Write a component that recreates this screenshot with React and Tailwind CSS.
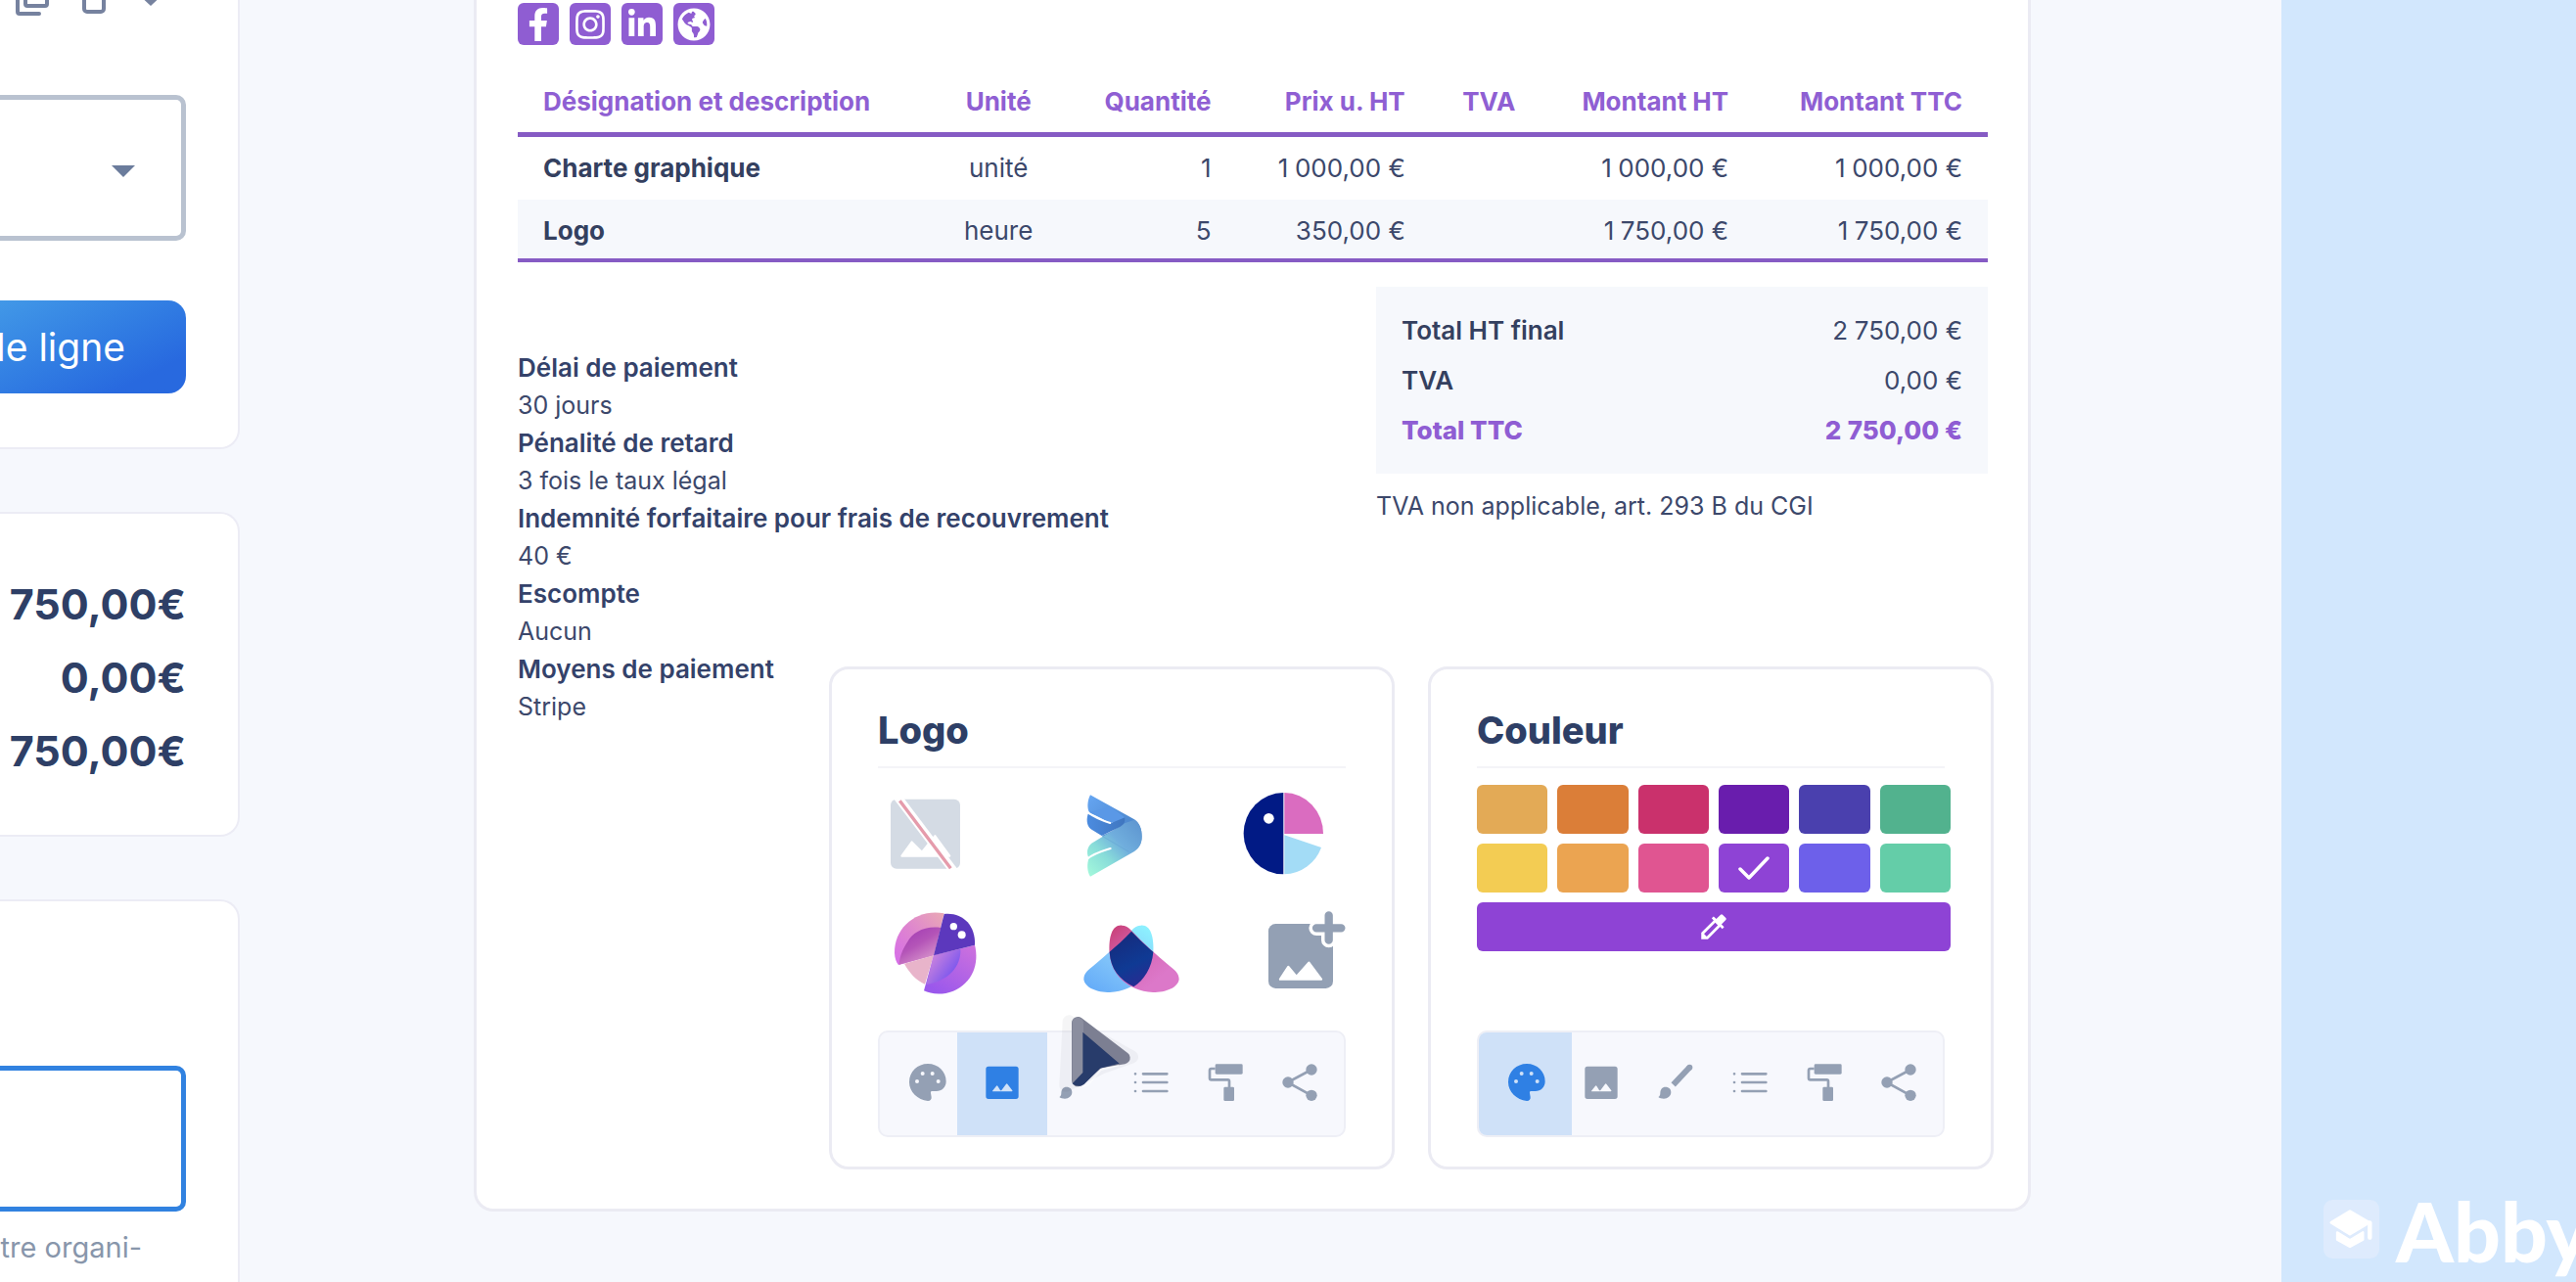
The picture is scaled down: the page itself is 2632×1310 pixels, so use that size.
import { useState } from "react";
import clsx from "clsx";
import { FaFacebookF, FaInstagram, FaLinkedinIn, FaGlobeAmericas } from "react-icons/fa";
import { MdColorize } from "react-icons/md";

const socials = [
  { label: "Facebook", Icon: FaFacebookF, size: "size-[34px]" },
  { label: "Instagram", Icon: FaInstagram, size: "size-[34px]" },
  { label: "LinkedIn", Icon: FaLinkedinIn, size: "size-[32px]" },
  { label: "Site web", Icon: FaGlobeAmericas, size: "size-[34px]" },
];

const lines = [
  { name: "Charte graphique", unit: "unité", qty: "1", price: "1\u2005000,00 €", ht: "1\u2005000,00 €", ttc: "1\u2005000,00 €" },
  { name: "Logo", unit: "heure", qty: "5", price: "350,00 €", ht: "1\u2005750,00 €", ttc: "1\u2005750,00 €" },
];

const terms = [
  ["Délai de paiement", "30 jours"],
  ["Pénalité de retard", "3 fois le taux légal"],
  ["Indemnité forfaitaire pour frais de recouvrement", "40 €"],
  ["Escompte", "Aucun"],
  ["Moyens de paiement", "Stripe"],
];

const colors = [
  { name: "Ocre", bg: "bg-[#e3aa56]" },
  { name: "Orange", bg: "bg-[#db7e38]" },
  { name: "Framboise", bg: "bg-[#ca316c]" },
  { name: "Violet foncé", bg: "bg-[#691dad]" },
  { name: "Indigo", bg: "bg-[#4a40ae]" },
  { name: "Vert", bg: "bg-[#52b28e]" },
  { name: "Jaune", bg: "bg-[#f3cc53]" },
  { name: "Orange clair", bg: "bg-[#eba451]" },
  { name: "Rose", bg: "bg-[#e05591]" },
  { name: "Violet", bg: "bg-[#8e43d5]" },
  { name: "Bleu", bg: "bg-[#6d60ea]" },
  { name: "Menthe", bg: "bg-[#64cda8]" },
];

/* ---------- toolbar icons ---------- */

const PaletteIcon = () => (
  <svg viewBox="104 7 144 144" className="size-12" fill="currentColor" fillRule="evenodd">
    <path d="M176 22C208 22 232 46 232 76C232 94 219 106 202 106H190C186 106 184 108 185 112L187 124C188 131 184 136 176 136C145 132 119 108 119 78C119 46 145 22 176 22ZM137 76a6 6 0 1 0 12 0a6 6 0 1 0-12 0ZM154 52a6 6 0 1 0 12 0a6 6 0 1 0-12 0ZM184 52a6 6 0 1 0 12 0a6 6 0 1 0-12 0ZM202 76a6 6 0 1 0 12 0a6 6 0 1 0-12 0Z" />
  </svg>
);

const ImageIcon = () => (
  <svg viewBox="332 7 144 144" className="size-12" fill="currentColor" fillRule="evenodd">
    <path d="M362 30H446Q454 30 454 38V122Q454 130 446 130H362Q354 130 354 122V38Q354 30 362 30ZM375 107H434Q436 106 435 104L420 84Q418 81 416 84L402 103Q400 105 398 103L390 90Q388 87 386 90L374 105Q374 107 375 107Z" />
  </svg>
);

const BrushIcon = () => (
  <svg viewBox="559 7 144 144" className="size-12" fill="currentColor">
    <path d="M673 34L624 86" stroke="currentColor" strokeWidth="18" />
    <circle cx="674" cy="33" r="9" />
    <path d="M600 93c11 0 17 7 17 16c0 12-10 20-22 20c-6 0-14-2-17-5c4-2 6-5 6-12c0-11 6-19 16-19z" />
  </svg>
);

const ListIcon = () => (
  <svg viewBox="787 7 144 144" className="size-12" fill="none" stroke="currentColor" strokeWidth="8" strokeLinecap="round">
    <path d="M835 53H908M835 79H908M835 106H908" />
    <path d="M811 53h.1M811 79h.1M811 106h.1" />
  </svg>
);

const RollerIcon = () => (
  <svg viewBox="1015 7 144 144" className="size-12" fill="currentColor">
    <rect x="1056" y="23" width="84" height="31" rx="4" />
    <path d="M1056 37H1044Q1039 37 1039 42V66Q1039 71 1044 71H1095Q1099 71 1099 76V95" fill="none" stroke="currentColor" strokeWidth="8" />
    <rect x="1082" y="93" width="32" height="43" rx="4" />
  </svg>
);

const ShareIcon = () => (
  <svg viewBox="1244 7 144 144" className="size-12" fill="currentColor">
    <path d="M1352 40L1279 79L1352 119" fill="none" stroke="currentColor" strokeWidth="8" />
    <circle cx="1280" cy="79" r="17" />
    <circle cx="1352" cy="40" r="17" />
    <circle cx="1352" cy="119" r="17" />
  </svg>
);

const tools = [
  { id: "couleur", label: "Couleur", Icon: PaletteIcon },
  { id: "logo", label: "Logo", Icon: ImageIcon },
  { id: "style", label: "Style", Icon: BrushIcon },
  { id: "liste", label: "Liste", Icon: ListIcon },
  { id: "fond", label: "Fond", Icon: RollerIcon },
  { id: "partage", label: "Partage", Icon: ShareIcon },
];

/* ---------- logos ---------- */

const NoLogo = () => (
  <svg viewBox="9 30 300 300" className="size-[100px] overflow-visible">
    <rect x="48" y="68" width="213" height="213" rx="18" fill="#d4dbe4" />
    <path d="M82 242L113 199L144 230L184 180L229 242Z" fill="#fff" stroke="#fff" strokeWidth="6" strokeLinejoin="round" />
    <path d="M70 62L242 289" stroke="#fff" strokeWidth="26" />
    <path d="M76 73L232 280" stroke="#e59bab" strokeWidth="10" />
  </svg>
);

const WingLogo = () => (
  <svg viewBox="639 30 300 300" className="size-[100px]">
    <defs>
      <linearGradient id="wingTop" x1="0" y1="0" x2="1" y2="1">
        <stop offset="0" stopColor="#66a6f3" />
        <stop offset="0.6" stopColor="#4f8ad0" />
        <stop offset="1" stopColor="#5f9bd6" />
      </linearGradient>
      <linearGradient id="wingBottom" x1="0" y1="1" x2="1" y2="0">
        <stop offset="0" stopColor="#a5fadb" />
        <stop offset="0.35" stopColor="#88dcd9" />
        <stop offset="0.6" stopColor="#70aedd" />
        <stop offset="1" stopColor="#5c93cf" />
      </linearGradient>
      <linearGradient id="wingFold" x1="0" y1="0" x2="1" y2="0">
        <stop offset="0" stopColor="#4c8ce0" />
        <stop offset="1" stopColor="#3f76bf" />
      </linearGradient>
    </defs>
    <path d="M660 55L795 130C812 142 818 160 818 182C818 205 808 222 778 229L695 180L762 150L658 110C650 98 650 75 660 55Z" fill="url(#wingTop)" />
    <path d="M660 305C650 290 649 265 656 248C647 235 650 214 664 203L765 142L795 131C812 142 818 160 818 182C818 202 812 216 795 228Z" fill="url(#wingBottom)" />
    <path d="M653 113C648 128 648 148 662 160L695 180L752 152C764 145 768 136 765 122L722 142Z" fill="url(#wingFold)" />
    <path d="M658 108L722 142L766 124L720 90Z" fill="#5a98e6" />
    <path d="M695 180L778 229" stroke="#5b97d0" strokeWidth="2" opacity="0.5" />
    <path d="M652 108C675 126 698 134 721 141" fill="none" stroke="#fff" strokeWidth="6" strokeLinecap="round" />
    <path d="M652 250C675 232 698 227 722 219" fill="none" stroke="#fff" strokeWidth="6" strokeLinecap="round" />
  </svg>
);

const PieLogo = () => (
  <svg viewBox="1143 30 300 300" className="size-[100px] overflow-visible">
    <path d="M1252 48A122 125 0 0 0 1252 298Z" fill="#011a85" />
    <path d="M1255 48A120 125 0 0 1 1374 174H1255Z" fill="#da6cc0" />
    <path d="M1255 178L1368 216A124 124 0 0 1 1255 298Z" fill="#a3dcf6" />
    <circle cx="1207" cy="127" r="16" fill="#fff" />
  </svg>
);

const OrbLogo = () => (
  <svg viewBox="9 390 300 300" className="size-[100px] overflow-visible">
    <defs>
      <linearGradient id="orbTop" x1="1" y1="0" x2="0" y2="1">
        <stop offset="0" stopColor="#eaa9b4" />
        <stop offset="0.5" stopColor="#de85cf" />
        <stop offset="1" stopColor="#d66bea" />
      </linearGradient>
      <linearGradient id="orbInner" x1="0.2" y1="0.1" x2="0.8" y2="1">
        <stop offset="0" stopColor="#a53fb4" />
        <stop offset="0.4" stopColor="#b455b8" />
        <stop offset="1" stopColor="#e0a3d0" />
      </linearGradient>
      <linearGradient id="orbBottom" x1="1" y1="0" x2="0.3" y2="1">
        <stop offset="0" stopColor="#cf72dd" />
        <stop offset="1" stopColor="#9a58ec" />
      </linearGradient>
      <linearGradient id="orbCore" x1="0" y1="0.2" x2="0.8" y2="0.8">
        <stop offset="0" stopColor="#d88bdb" />
        <stop offset="1" stopColor="#7553ef" />
      </linearGradient>
    </defs>
    <path d="M212 418C130 402 58 460 60 540C61 556 65 568 72 576L180 547Z" fill="url(#orbTop)" />
    <path d="M202 462C150 455 115 478 100 505C84 530 76 550 74 575L180 547Z" fill="url(#orbInner)" />
    <path d="M90 572L180 547L153 635C125 622 105 600 90 572Z" fill="#e8b4ca" />
    <path d="M306 515C320 570 300 630 240 656C205 670 170 665 150 655L180 547Z" fill="url(#orbBottom)" />
    <path d="M262 527C265 580 225 625 157 636L180 547Z" fill="url(#orbCore)" />
    <path d="M212 420C266 414 309 452 306 515L180 547Z" fill="#5c38bd" />
    <circle cx="241" cy="458" r="11" fill="#fff" />
    <circle cx="266" cy="484" r="12" fill="#fff" />
  </svg>
);

const LobesLogo = () => (
  <svg viewBox="639 390 300 300" className="size-[100px] overflow-visible">
    <defs>
      <linearGradient id="lobeBlue" x1="0.2" y1="1" x2="0.9" y2="0">
        <stop offset="0" stopColor="#66adf8" />
        <stop offset="0.5" stopColor="#86c8fa" />
        <stop offset="1" stopColor="#8df3ff" />
      </linearGradient>
      <linearGradient id="lobePink" x1="0" y1="0" x2="0.7" y2="0.8">
        <stop offset="0" stopColor="#c83d72" />
        <stop offset="0.5" stopColor="#d566b4" />
        <stop offset="1" stopColor="#dc78c9" />
      </linearGradient>
      <linearGradient id="lobeNavy" x1="0.3" y1="0" x2="0.7" y2="1">
        <stop offset="0" stopColor="#162a7c" />
        <stop offset="0.6" stopColor="#0f3a94" />
        <stop offset="1" stopColor="#2a2a92" />
      </linearGradient>
    </defs>
    <path d="M815 455C845 452 856 490 853 540C848 605 800 655 720 660C680 660 643 645 640 620C640 600 655 590 670 578C710 545 750 510 785 472C795 460 805 455 815 455Z" fill="url(#lobeBlue)" />
    <path d="M757 455C727 452 716 490 719 540C724 605 772 655 852 660C892 660 929 645 932 620C932 600 917 590 902 578C862 545 822 510 787 472C777 460 767 455 757 455Z" fill="url(#lobePink)" />
    <path d="M786 473C810 498 835 520 853 536C849 585 825 622 793 643C750 620 722 590 719 536C740 518 762 498 786 473Z" fill="url(#lobeNavy)" />
  </svg>
);

const AddLogo = () => (
  <svg viewBox="1143 390 300 300" className="size-[100px] overflow-visible">
    <rect x="1206" y="450" width="198" height="198" rx="22" fill="#93a0b4" />
    <path d="M1242 620L1267 582L1292 612L1330 569L1368 620Z" fill="#fff" stroke="#fff" strokeWidth="7" strokeLinejoin="round" />
    <path d="M1353 463H1429M1391 424V500" stroke="#fff" strokeWidth="46" strokeLinecap="round" strokeLinejoin="round" />
    <path d="M1353 463H1429M1391 424V500" stroke="#93a0b4" strokeWidth="25" strokeLinecap="round" />
  </svg>
);

const logos = [
  { label: "Aucun logo", Logo: NoLogo },
  { label: "Logo ailes", Logo: WingLogo },
  { label: "Logo camembert", Logo: PieLogo },
  { label: "Logo sphère", Logo: OrbLogo },
  { label: "Logo pétales", Logo: LobesLogo },
  { label: "Ajouter un logo", Logo: AddLogo },
];

const Cursor = () => (
  <svg viewBox="30 30 240 240" className="pointer-events-none absolute left-[229px] top-[350px] size-20 overflow-visible" aria-hidden="true">
    <path d="M70 60L262 168L170 200L60 255Z" fill="#23262f" opacity="0.04" stroke="#23262f" strokeWidth="40" strokeLinejoin="round" />
    <path d="M97 64L238 171L160 184L97 240Z" fill="#7c7f92" stroke="#7c7f92" strokeWidth="38" strokeLinejoin="round" />
    <path d="M97 64V240" stroke="#8b8e9f" strokeWidth="34" strokeLinecap="round" />
    <path d="M112 92L224 188L165 203L116 252Q98 264 80 250L112 216Z" fill="#283c6b" />
    <path d="M112 260L128 254L168 208L222 194" fill="none" stroke="#fff" strokeWidth="4" opacity="0.6" />
  </svg>
);

function Toolbar({ active }) {
  return (
    <div className="mt-auto flex h-[109px] overflow-hidden rounded-[10px] border-2 border-[#eeeff6] bg-[#f7f8fd] pl-[11px]">
      {tools.map(({ id, label, Icon }, i) => (
        <button
          key={id}
          type="button"
          aria-label={label}
          aria-pressed={id === active}
          className={clsx(
            "flex shrink-0 items-center justify-center pb-1",
            id !== active && "w-[76px] text-[#94a0b4]",
            id === active && "-mr-2 bg-[#cfe1f8] text-[#2f80e4]",
            id === active && (i === 0 ? "-ml-[11px] w-[95px] pl-[11px] pr-2" : "-ml-2 w-[92px]")
          )}
        >
          <Icon />
        </button>
      ))}
    </div>
  );
}

function Panel({ title, active, children }) {
  return (
    <section className="relative flex w-[578px] flex-col rounded-[20px] border-3 border-[#ebebf3] bg-white px-[47px] pb-[30px] pt-[38px]">
      <h2 className="border-b-2 border-[#f4f4f8] pb-[13px] text-[38px] leading-[48px] font-extrabold text-[#2e3f66]">{title}</h2>
      {children}
      <Toolbar active={active} />
      {active === "logo" && <Cursor />}
    </section>
  );
}

function Sidebar() {
  const card = "border-[#ececf5] bg-white pr-[53px]";
  return (
    <aside className="flex w-[245px] shrink-0 flex-col gap-16">
      <div className={clsx(card, "rounded-br-[20px] border-r-2 border-b-2 pb-[55px]")}>
        <div className="-mt-6 flex gap-[22px] pl-[14px] text-[#76829f]">
          <button type="button" aria-label="Dupliquer">
            <svg viewBox="14 -24 40 40" className="size-10" fill="none" stroke="currentColor" strokeWidth="4" strokeLinejoin="round" strokeLinecap="round">
              <path d="M18 -16V12Q18 14 20 14H40" />
              <rect x="26" y="-20" width="22" height="26" rx="2" />
            </svg>
          </button>
          <button type="button" aria-label="Supprimer">
            <svg viewBox="76 -24 40 40" className="size-10" fill="none" stroke="currentColor" strokeWidth="4">
              <rect x="86" y="-18" width="20" height="30" rx="3" />
            </svg>
          </button>
          <button type="button" aria-label="Réduire">
            <svg viewBox="138 -24 40 40" className="size-10" fill="currentColor">
              <path d="M140 -7H168L154 6Z" />
            </svg>
          </button>
        </div>
        <div className="relative mt-[81px]">
          <select aria-label="Type de produit" className="h-[149px] w-full appearance-none rounded-r-[10px] border-5 border-l-0 border-[#b9c2d0] bg-white">
            <option value=""></option>
          </select>
          <svg viewBox="0 0 26 14" className="pointer-events-none absolute right-[51px] top-[71px] w-[26px]" fill="#6b7c9c">
            <path d="M1 1H25L13 13Z" />
          </svg>
        </div>
        <button
          type="button"
          className="mt-[61px] flex h-[95px] w-full items-center justify-end rounded-r-[18px] bg-linear-to-br from-[#4298e7] to-[#2869df] to-80% pr-[62px] text-[39px] leading-[48px] whitespace-nowrap text-white"
        >
          de ligne
        </button>
      </div>

      <div className={clsx(card, "rounded-r-[20px] border-y-2 border-r-2 pb-12 pt-[55px] text-right text-[43px] leading-[75px] font-bold text-[#2e3f66]")}>
        <p>750,00€</p>
        <p>0,00€</p>
        <p>750,00€</p>
      </div>

      <div className={clsx(card, "flex-1 rounded-tr-[20px] border-t-2 border-r-2 pt-[168px]")}>
        <input
          type="text"
          id="organisation"
          aria-describedby="organisation-help"
          aria-label="Nom interne"
          className="h-[149px] w-full rounded-r-[10px] border-5 border-l-0 border-[#3182e0] bg-white px-4 text-[29px] outline-none"
        />
        <p id="organisation-help" className="mt-[17px] flex justify-end pr-[45px] text-[29px] leading-10 whitespace-nowrap text-[#8896ab]">
          otre organi-
        </p>
      </div>
    </aside>
  );
}

function LineTable() {
  return (
    <table className="mt-[26px] w-full table-fixed border-separate border-spacing-0 text-right">
      <colgroup>
        <col className="w-[28.3%]" />
        <col className="w-[8.8%]" />
        <col className="w-[11.8%]" />
        <col className="w-[13.2%]" />
        <col className="w-[7.5%]" />
        <col className="w-[14.5%]" />
        <col className="w-[15.9%]" />
      </colgroup>
      <thead>
        <tr className="whitespace-nowrap text-[#8f5fd3] [&>th]:border-b-5 [&>th]:border-[#865bc4] [&>th]:px-[26px] [&>th]:pb-[15px] [&>th]:pt-4 [&>th]:font-bold">
          <th scope="col" className="text-left">Désignation et description</th>
          <th scope="col" className="text-center">Unité</th>
          <th scope="col">Quantité</th>
          <th scope="col">Prix u. HT</th>
          <th scope="col">TVA</th>
          <th scope="col">Montant HT</th>
          <th scope="col">Montant TTC</th>
        </tr>
      </thead>
      <tbody>
        {lines.map((line, i) => (
          <tr
            key={line.name}
            className={clsx(
              "whitespace-nowrap [&>*]:px-[26px] [&>*]:pt-4",
              i === lines.length - 1 ? "bg-[#f6f8fc] [&>*]:border-b-4 [&>*]:border-[#865bc4] [&>*]:pb-3" : "[&>*]:pb-4"
            )}
          >
            <th scope="row" className="text-left font-bold text-[#34405f]">{line.name}</th>
            <td className="text-center">{line.unit}</td>
            <td>{line.qty}</td>
            <td>{line.price}</td>
            <td></td>
            <td>{line.ht}</td>
            <td>{line.ttc}</td>
          </tr>
        ))}
      </tbody>
    </table>
  );
}

export default function App() {
  const [color, setColor] = useState("Violet");

  return (
    <div className="flex h-screen overflow-hidden bg-[#f6f8fd] font-['Inter',sans-serif]">
      <Sidebar />

      <main className="min-w-0 flex-1 pl-[239px] pr-64">
        <article className="rounded-b-[20px] border-3 border-t-0 border-[#ebebf3] bg-white pb-10 pl-[42px] pr-[41px] pt-[3px] text-[26px] leading-8 text-[#3c486b]">
          <nav className="flex gap-[11px]">
            {socials.map(({ label, Icon, size }) => (
              <a key={label} href="#" aria-label={label} className="flex h-[43px] w-[42px] items-center justify-center rounded-[6px] bg-[#8f5dd2] text-white">
                <Icon className={size} />
              </a>
            ))}
          </nav>

          <LineTable />

          <div className="flex items-start justify-between">
            <dl className="mt-[89px] leading-[38px]">
              {terms.map(([label, value]) => (
                <div key={label} className="pb-px">
                  <dt className="font-semibold text-[#34426a]">{label}</dt>
                  <dd className="text-[25px]">{value}</dd>
                </div>
              ))}
            </dl>
            <div className="mt-[25px] w-[625px]">
              <dl className="bg-[#f6f8fc] px-[26px] py-[19px] leading-[51px]">
                <div className="flex justify-between">
                  <dt className="font-semibold text-[#34405f]">Total HT final</dt>
                  <dd>{"2\u2005750,00 €"}</dd>
                </div>
                <div className="flex justify-between">
                  <dt className="font-semibold text-[#34405f]">TVA</dt>
                  <dd>0,00 €</dd>
                </div>
                <div className="flex justify-between font-extrabold text-[#8f5dd3]">
                  <dt>Total TTC</dt>
                  <dd>{"2\u2005750,00 €"}</dd>
                </div>
              </dl>
              <p className="mt-[14px] text-[25px] leading-[38px]">TVA non applicable, art. 293 B du CGI</p>
            </div>
          </div>

          <div className="-mr-[6px] -mt-[61px] flex justify-end gap-[34px]">
            <Panel title="Logo" active="logo">
              <div className="mb-[29px] mt-[19px] grid grid-cols-[210px_168px_100px] gap-y-5">
                {logos.map(({ label, Logo }) => (
                  <button key={label} type="button" aria-label={label} className="size-[100px]">
                    <Logo />
                  </button>
                ))}
              </div>
            </Panel>

            <Panel title="Couleur" active="couleur">
              <div className="-mr-[6px] mt-[17px] grid grid-cols-6 gap-[10px]">
                {colors.map(({ name, bg }) => (
                  <button
                    key={name}
                    type="button"
                    aria-label={name}
                    aria-pressed={color === name}
                    onClick={() => setColor(name)}
                    className={clsx("flex h-[50px] items-center justify-center rounded-[6px]", bg)}
                  >
                    {color === name && (
                      <svg viewBox="0 0 32 24" className="w-8" fill="none" stroke="#fff" strokeWidth="3.5" strokeLinecap="round" strokeLinejoin="round">
                        <path d="M2 13L11 22L30 2" />
                      </svg>
                    )}
                  </button>
                ))}
                <button type="button" aria-label="Couleur personnalisée" className="col-span-6 flex h-[50px] items-center justify-center rounded-[6px] bg-[#8e43d5] text-white">
                  <MdColorize className="size-[34px]" />
                </button>
              </div>
            </Panel>
          </div>
        </article>
      </main>

      <div className="flex w-[301px] shrink-0 items-end gap-[17px] overflow-hidden bg-[#d2e7fd] pb-6 pl-[43px]">
        <svg viewBox="222 138 171 180" className="w-[57px] shrink-0">
          <rect x="222" y="138" width="171" height="180" rx="28" fill="#deebfd" />
          <g fill="#fff" stroke="#fff" strokeLinejoin="round">
            <path d="M246 208L303 173L362 208L303 243Z" strokeWidth="9" />
            <path d="M264 238L303 262L343 238V260L303 282L264 260Z" strokeWidth="7" />
            <path d="M364 208V254" strokeWidth="13" strokeLinecap="round" />
          </g>
        </svg>
        <span className="h-[60px] font-['Lato',sans-serif] text-[84px] leading-[64px] font-black text-white">Abby</span>
      </div>
    </div>
  );
}
